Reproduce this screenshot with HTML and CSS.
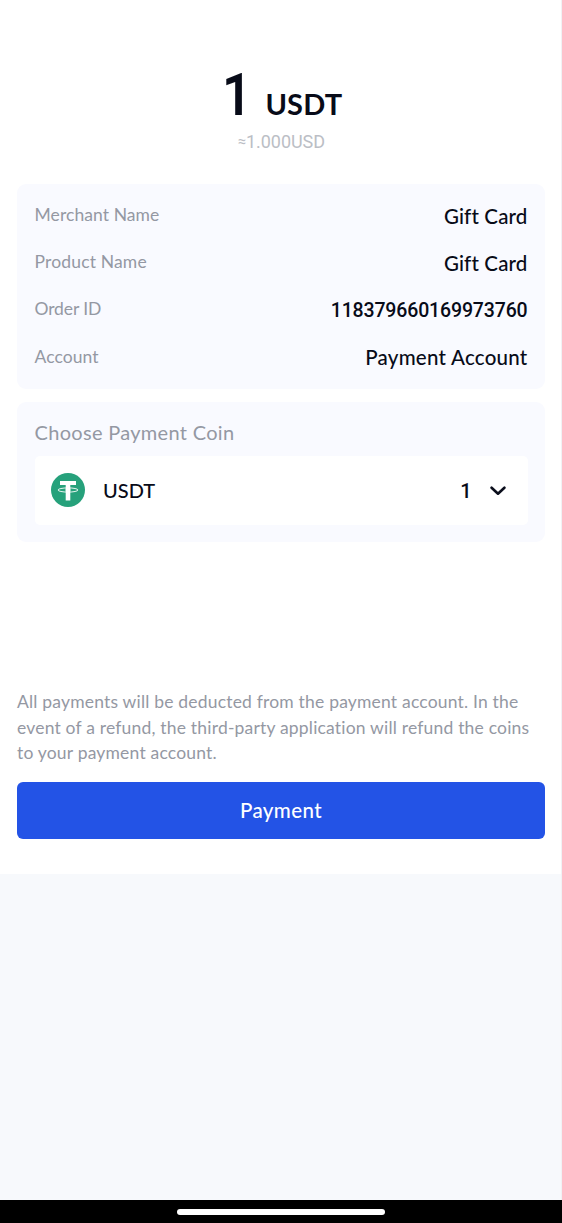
FILE: index.html
```html
<!DOCTYPE html>
<html lang="en">
<head>
<meta charset="utf-8">
<title>Payment</title>
<link rel="stylesheet" href="styles.css">
</head>
<body>
<div class="screen">
  <main class="sheet">
    <header class="amount">
      <div class="total"><span class="value">1</span><span class="unit">USDT</span></div>
      <div class="fiat"><span class="approx">≈</span>1.000USD</div>
    </header>
    <dl class="card details">
      <div class="row"><dt class="merchant">Merchant Name</dt><dd class="gift">Gift Card</dd></div>
      <div class="row"><dt class="product">Product Name</dt><dd class="gift">Gift Card</dd></div>
      <div class="row"><dt class="order">Order ID</dt><dd class="number">118379660169973760</dd></div>
      <div class="row"><dt class="account">Account</dt><dd class="pay-account">Payment Account</dd></div>
    </dl>
    <section class="card coin">
      <h2 class="coin-title">Choose Payment Coin</h2>
      <div class="select">
        <svg class="logo" viewBox="0 0 34 34" aria-hidden="true">
          <circle cx="17" cy="17" r="17" fill="#26a17b"/>
          <path d="M9 8h16v4h-5.700v15.500h-4.600V12H9z" fill="#fff"/>
          <ellipse cx="17" cy="17" rx="10" ry="2.100" fill="none" stroke="#fff" stroke-width=".9"/>
          <path d="M14.700 15.600h4.600v2.400h-4.600z" fill="#fff"/>
        </svg>
        <span class="coin-name">USDT</span>
        <span class="coin-value">1</span>
        <svg class="chevron" viewBox="0 0 16 10" aria-hidden="true"><path d="M1.600 1.700 8 7.700l6.400-6" fill="none" stroke="#0b0e1c" stroke-width="2.600" stroke-linecap="round" stroke-linejoin="round"/></svg>
      </div>
    </section>
    <p class="notice"><span>All payments will be deducted from the payment account. In the</span><span>event of a refund, the third-party application will refund the coins</span><span>to your payment account.</span></p>
    <button class="pay">Payment</button>
  </main>
  <footer class="navbar"><div class="handle"></div></footer>
</div>
</body>
</html>
```
FILE: styles.css
```css
* { box-sizing: border-box; margin: 0; padding: 0; }
body { font-family: Lato, "Open Sans", sans-serif; color: #080b18; background: #f7f9fc; }
.screen { height: 1223px; display: flex; flex-direction: column; justify-content: space-between; border-right: 1px solid #f1f2f5; background: #f7f9fc; }
.sheet { height: 874px; background: #fff; padding: 64px 16px 0 17px; display: flex; flex-direction: column; }
.amount { height: 120px; display: flex; flex-direction: column; align-items: center; }
.total { height: 64px; display: flex; align-items: baseline; gap: 12px; margin-top: -1px; margin-bottom: 1px; }
.value { font: 600 59px/64px Roboto, sans-serif; transform: scaleX(.88); }
.unit { font-size: 29px; font-weight: 700; letter-spacing: .2px; }
.fiat { font: 400 18px/28px Roboto, sans-serif; color: #bbbec5; display: flex; letter-spacing: -.05px; }
.approx { width: 9px; font: 17px/28px Lato, sans-serif; }
.card { background: #f9faff; border-radius: 9px; padding: 0 17.500px; }
.details { height: 205px; padding-top: 8px; }
.row { height: 47.200px; display: flex; justify-content: space-between; align-items: center; white-space: nowrap; }
dt { font-size: 17.500px; line-height: 24px; color: #9498a3; margin-top: -1px; }
.merchant { letter-spacing: .08px; }
.product { letter-spacing: .16px; }
.order { letter-spacing: -.12px; }
.account { letter-spacing: .08px; }
dd { font-size: 20.500px; line-height: 26px; margin-top: 0; font-weight: 500; }
.gift { letter-spacing: .15px; }
.pay-account { letter-spacing: .25px; }
.number { font: 500 19.500px/26px Roboto, sans-serif; letter-spacing: -.15px; margin-top: 2px; }
.coin { height: 140px; margin-top: 13px; padding-top: 16.500px; }
.coin-title { font-size: 20px; line-height: 26px; font-weight: 400; letter-spacing: .31px; color: #9498a3; white-space: nowrap; }
.select { height: 69px; margin-top: 11.500px; background: #fff; border-radius: 5px; display: flex; align-items: center; padding: 0 22px 0 16.500px; }
.logo { width: 34px; height: 34px; margin-top: -1px; }
.coin-name { font-size: 20px; margin-left: 18px; margin-right: auto; margin-top: -2px; font-weight: 500; }
.coin-value { font: 500 20px/26px Roboto, sans-serif; }
.chevron { width: 16px; height: 10px; margin-left: 18px; margin-top: 1px; }
.notice { margin-top: 147px; font-size: 17.500px; line-height: 25.700px; letter-spacing: .19px; color: #9498a3; white-space: nowrap; }
.notice span { display: block; width: max-content; }
.pay { margin-top: 16px; height: 57px; flex: none; border: 0; border-radius: 6px; padding-bottom: 2px; background: #2353e6; color: #fff; font: 500 20.500px/26px Lato, sans-serif; letter-spacing: .4px; }
.navbar { height: 23px; background: #000; display: flex; align-items: center; justify-content: center; margin-right: -1px; }
.handle { width: 208px; height: 6px; border-radius: 3px; background: #fff; }
```
